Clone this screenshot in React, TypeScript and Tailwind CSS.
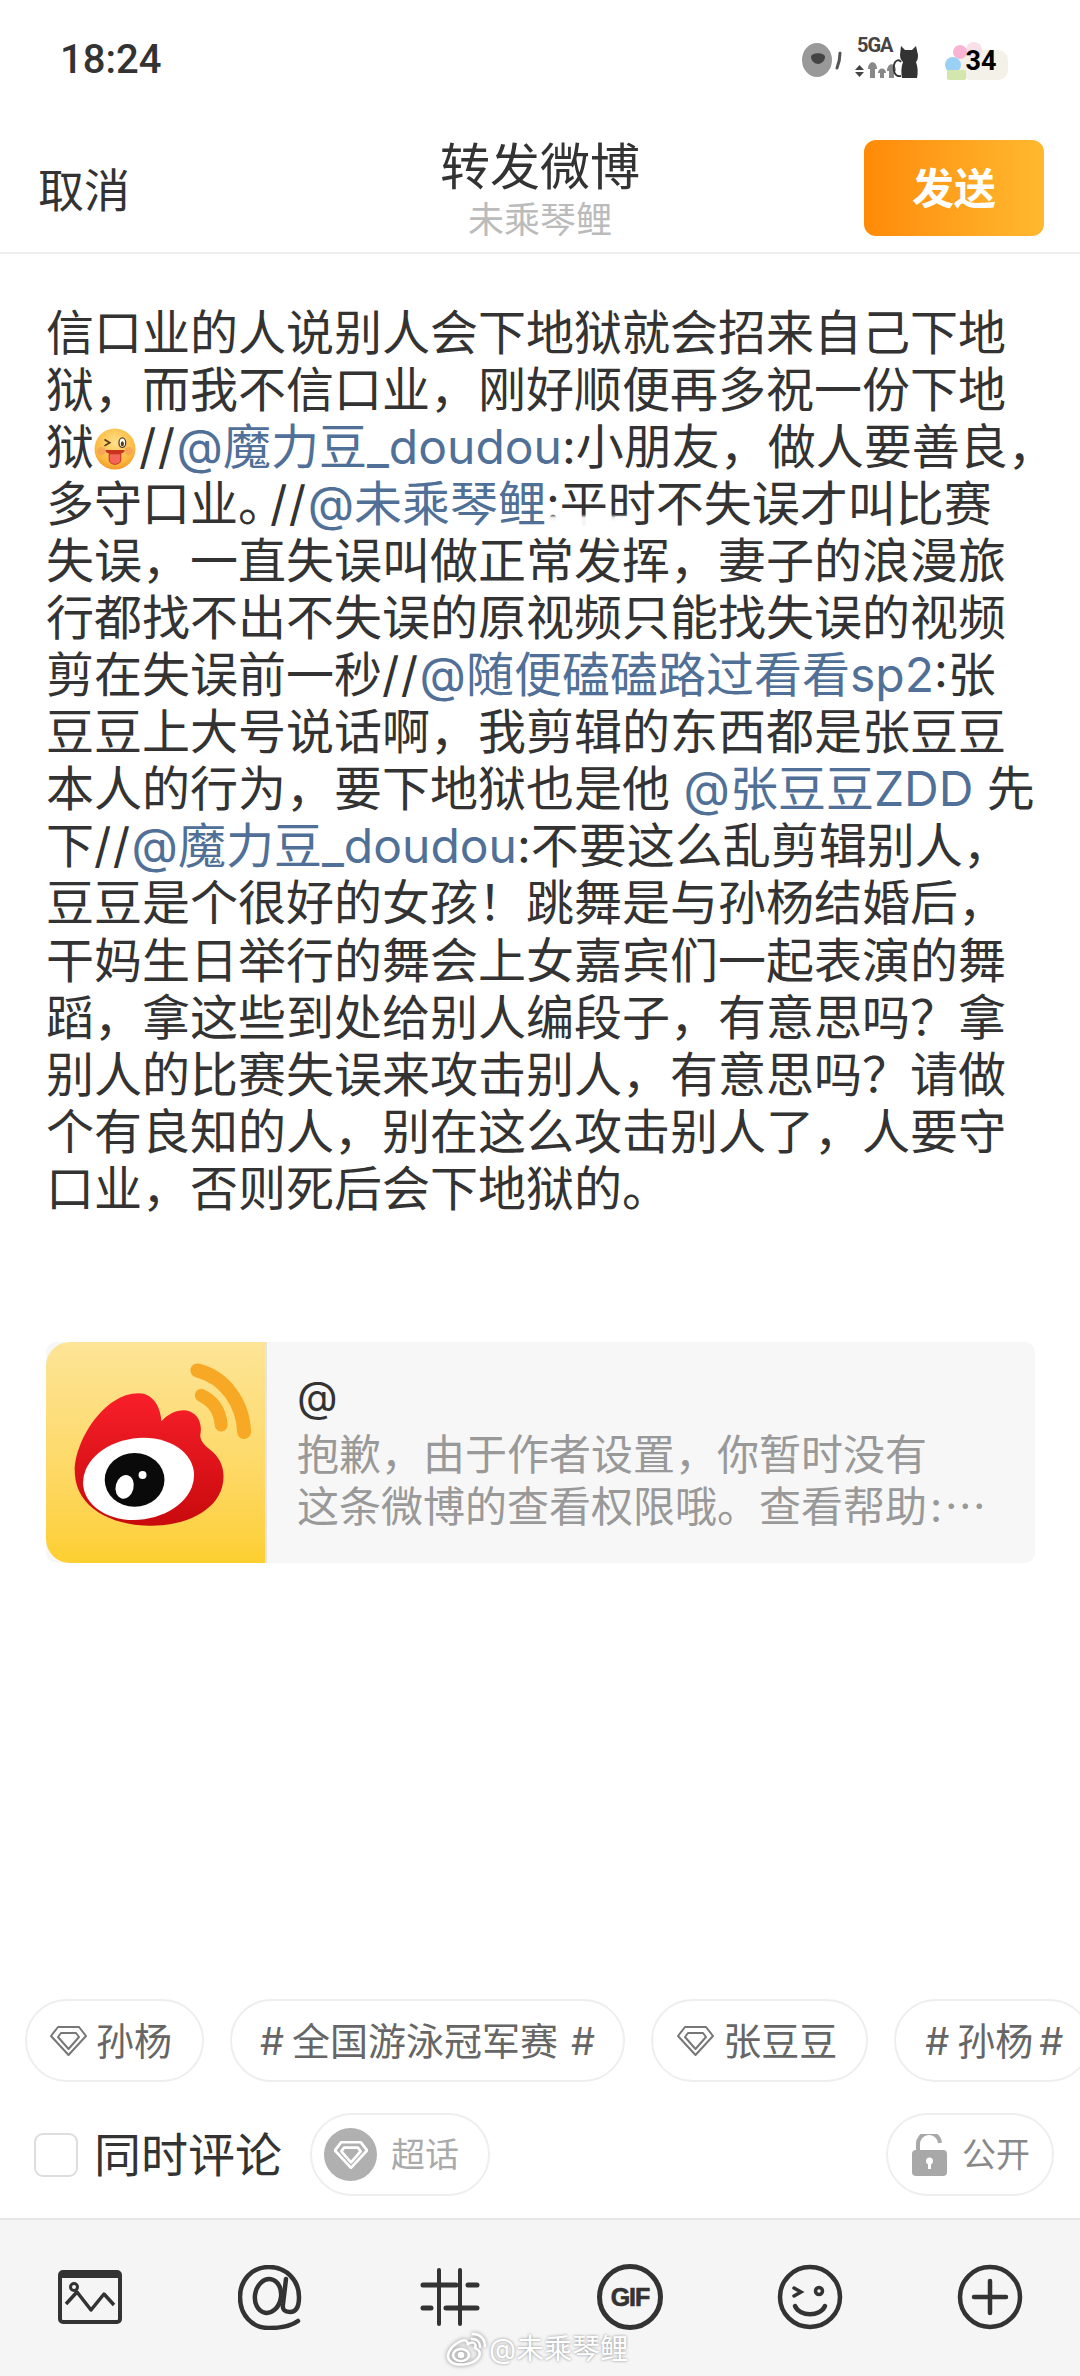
import React from 'react';

const Link = ({ children }: { children: React.ReactNode }) => <span className="text-[#507097]">{children}</span>;

const Slashes = () => <span className="tracking-[1.5px]">//</span>;

const WinkEmoji = () => (
  <svg viewBox="0 0 40 40" className="mr-[3px] inline-block h-[42px] w-[42px] align-[-6px]">
    <defs>
      <radialGradient id="face" cx="50%" cy="35%" r="70%">
        <stop offset="0%" stopColor="#ffe08a" />
        <stop offset="70%" stopColor="#fbb93f" />
        <stop offset="100%" stopColor="#ef8f25" />
      </radialGradient>
    </defs>
    <circle cx="20" cy="20" r="19.5" fill="url(#face)" />
    <circle cx="7" cy="22" r="4" fill="#f7945d" opacity="0.6" />
    <circle cx="33" cy="22" r="4" fill="#f7945d" opacity="0.6" />
    <path d="M10 11l5 3-5 3" fill="none" stroke="#5a3a18" strokeWidth="1.6" />
    <ellipse cx="27" cy="14" rx="3.2" ry="4.5" fill="#fff" stroke="#5a3a18" strokeWidth="1.2" />
    <ellipse cx="27" cy="15" rx="1.5" ry="2.4" fill="#5a3a18" />
    <path d="M11 21h18c0 2-1 3-3 3v6c0 3-3 5-6 5s-6-2-6-5v-6c-2 0-3-1-3-3z" fill="#c9341f" />
    <path d="M15 25h10v5c0 3-2 4-5 4s-5-1-5-4z" fill="#f4655a" />
  </svg>
);

const lines: React.ReactNode[] = [
  '信口业的人说别人会下地狱就会招来自己下地',
  '狱，而我不信口业，刚好顺便再多祝一份下地',
  <>狱<WinkEmoji /><Slashes /><Link>@魔力豆_doudou</Link>:小朋友，做人要善良，</>,
  <>多守口业<span className="mr-[8px] [font-feature-settings:'halt']">。</span><Slashes /><Link>@未乘琴鲤</Link>:平时不失误才叫比赛</>,
  '失误，一直失误叫做正常发挥，妻子的浪漫旅',
  '行都找不出不失误的原视频只能找失误的视频',
  <>剪在失误前一秒<Slashes /><Link>@随便磕磕路过看看sp2</Link>:张</>,
  '豆豆上大号说话啊，我剪辑的东西都是张豆豆',
  <>本人的行为，要下地狱也是他 <Link>@张豆豆ZDD</Link> 先</>,
  <>下<Slashes /><Link>@魔力豆_doudou</Link>:不要这么乱剪辑别人，</>,
  '豆豆是个很好的女孩！跳舞是与孙杨结婚后，',
  '干妈生日举行的舞会上女嘉宾们一起表演的舞',
  '蹈，拿这些到处给别人编段子，有意思吗？拿',
  '别人的比赛失误来攻击别人，有意思吗？请做',
  '个有良知的人，别在这么攻击别人了，人要守',
  '口业，否则死后会下地狱的。',
];

const Diamond = ({ className, stroke = '#777', width = 2 }: { className: string; stroke?: string; width?: number }) => (
  <svg viewBox="0 0 37 30" className={className} fill="none" stroke={stroke} strokeWidth={width} strokeLinejoin="round">
    <path d="M8 1h21l7 9-17.5 19L1 10z" />
    <path d="M11 7h15l3 4-10.5 12L8 11z" />
  </svg>
);

const Tag = ({ children, className }: { children: React.ReactNode; className: string }) => (
  <div className={`flex h-[83px] shrink-0 items-center whitespace-nowrap rounded-full border-2 border-[#eeeeee] text-[38px] text-[#666666] ${className}`}>
    {children}
  </div>
);

const WeiboIcon = () => (
  <svg viewBox="0 0 220 221" className="h-full w-full">
    <defs>
      <linearGradient id="red" x1="0" y1="0" x2="0" y2="1">
        <stop offset="0%" stopColor="#f81f2a" />
        <stop offset="100%" stopColor="#c80a0c" />
      </linearGradient>
    </defs>
    <path d="M93 51c14 0 22 13 23 28 8-9 20-13 28-10 10 4 13 14 11 24 0 6 4 10 9 14 12 9 17 22 13 38-7 26-40 40-74 39-38-1-72-18-74-52-2-30 28-81 64-81z" fill="url(#red)" />
    <ellipse cx="93" cy="137" rx="56" ry="41" fill="#fff" transform="rotate(-8 93 137)" />
    <ellipse cx="89" cy="138" rx="30" ry="27" fill="#0a0a0a" />
    <ellipse cx="79" cy="145" rx="9" ry="12" fill="#fff" transform="rotate(15 79 145)" />
    <circle cx="97" cy="133" r="4" fill="#fff" />
    <path d="M156 53c13 6 19 17 20 30" fill="none" stroke="#f7a825" strokeWidth="13" strokeLinecap="round" />
    <path d="M152 28c28 7 46 33 47 62" fill="none" stroke="#f7a825" strokeWidth="14" strokeLinecap="round" />
  </svg>
);

export default function App() {
  return (
    <div className="relative flex h-[2376px] w-[1080px] flex-col overflow-hidden bg-white font-['Inter','Noto_Sans_CJK_SC',sans-serif] text-[#333333]">
      {/* status bar */}
      <div className="flex h-[120px] items-start justify-between pl-[60px] pr-[72px] pt-[36px] font-['Roboto','Noto_Sans_CJK_SC',sans-serif]">
        <span className="text-[40px] font-medium leading-[48px] text-[#333333]">18:24</span>
        <div className="flex items-start">
          <svg viewBox="0 0 40 34" className="mt-[7px] h-[34px] w-[40px]">
            <ellipse cx="15" cy="17" rx="15" ry="17" fill="#999" />
            <path d="M9 14c0-5 14-5 14 0 0 4-4 7-7 7s-7-3-7-7z" fill="#444" />
            <path d="M38 10c0 5-1 10-3 15" fill="none" stroke="#555" strokeWidth="3" strokeLinecap="round" />
          </svg>
          <div className="relative ml-[13px] mt-[1px] h-[41px] w-[64px]">
            <span className="absolute left-[2px] top-[-4px] text-[20px] font-bold leading-[24px] tracking-[-1px] text-[#444444]">5GA</span>
            <svg viewBox="0 0 64 41" className="absolute left-0 top-0 h-[41px] w-[64px]">
              <path d="M4.500 28L0 33h9zM0 35h9l-4.500 5z" fill="#444" />
              <path d="M13 32c0-9 9-9 9 0h-2v9h-5v-9zM23 36c0-6 8-6 8 0h-2v5h-4v-5zM32 34c0-9 9-9 9 0h-2v7h-5v-7z" fill="#888" />
              <path d="M46 9l4 4h7l4-4 2 9c0 4-1 6-2 7 2 5 2 11 1 16H47c-1-5-1-11 1-16-2-2-3-4-3-7z" fill="#333" />
              <path d="M46 39c-6 1-8-4-7-11 1-5 5-6 7-3" fill="none" stroke="#333" strokeWidth="1.800" />
            </svg>
          </div>
          <div className="relative ml-[23px] mt-[6px] flex h-[38px] w-[66px] items-center justify-center">
            <svg viewBox="0 0 66 38" className="absolute left-0 top-0 h-[38px] w-[66px]">
              <rect x="18" y="8" width="48" height="30" rx="10" fill="#f4f2e8" />
              <circle cx="32" cy="8" r="8" fill="#f8dfe8" />
              <circle cx="18" cy="10" r="7" fill="#f9b3d3" />
              <circle cx="11" cy="23" r="8" fill="#9bd0f5" />
              <rect x="5" y="28" width="19" height="10" rx="2" fill="#d2e6ae" />
            </svg>
            <span className="relative pl-[12px] text-[27px] font-bold leading-none text-black">34</span>
          </div>
        </div>
      </div>

      {/* header */}
      <div className="relative flex h-[134px] items-start justify-between border-b-2 border-[#eeeeee] pl-[38px] pr-[36px]">
        <span className="mt-[43px] text-[46px] leading-[54px] text-[#333333]">取消</span>
        <div className="absolute inset-x-0 top-[19px] flex flex-col items-center">
          <span className="text-[50px] leading-[56px] text-[#333333]">转发微博</span>
          <span className="mt-[3px] text-[36px] leading-[44px] text-[#bbbbbb]">未乘琴鲤</span>
        </div>
        <div className="relative mt-[20px] flex h-[96px] w-[180px] items-center justify-center rounded-[12px] bg-gradient-to-r from-[#ff8a05] to-[#ffb92e] text-[42px] font-bold text-white">
          发送
        </div>
      </div>

      {/* post text */}
      <div className="flex-1 pl-[46px]">
        <div className="mt-[50px] whitespace-nowrap text-[48px] leading-[57.05px] text-[#333333]">
          {lines.map((line, i) => (
            <div key={i}>{line}</div>
          ))}
        </div>

        <div className="mt-[125px] flex h-[221px] w-[989px] overflow-hidden rounded-[10px] bg-[#f7f7f7]">
          <div className="h-full w-[221px] shrink-0 overflow-hidden rounded-l-[24px] border-r-2 border-[#e4e4e4] bg-gradient-to-b from-[#fde597] to-[#fdcf2e]">
            <WeiboIcon />
          </div>
          <div className="flex flex-col pl-[30px] pt-[29px]">
            <span className="text-[42px] leading-[52px] text-[#333333]">@</span>
            <span className="mt-[6px] whitespace-nowrap text-[42px] leading-[52px] text-[#999999]">抱歉，由于作者设置，你暂时没有</span>
            <span className="whitespace-nowrap text-[42px] leading-[52px] text-[#999999]">这条微博的查看权限哦。查看帮助<span className="ml-[3px]">:</span><span className="ml-[2px]">⋯</span></span>
          </div>
        </div>
      </div>

      {/* topic suggestions */}
      <div className="flex gap-[26px] pl-[25px]">
        <Tag className="pl-[23px] pr-[30px] pt-[2px]">
          <Diamond className="mb-[2px] mr-[9px] h-[30px] w-[37px]" />
          孙杨
        </Tag>
        <Tag className="pl-[28px] pr-[28px] pt-[2px]">
          #<span className="ml-[8px] mr-[13px]">全国游泳冠军赛</span>#
        </Tag>
        <Tag className="pl-[24px] pr-[29px] pt-[2px]">
          <Diamond className="mb-[2px] mr-[9px] h-[30px] w-[37px]" />
          张豆豆
        </Tag>
        <Tag className="pl-[29px] pr-[26px] pt-[2px]">
          #<span className="ml-[8px] mr-[6px]">孙杨</span>#
        </Tag>
      </div>

      {/* options */}
      <div className="mt-[31px] flex h-[83px] items-center pl-[34px] pr-[26px]">
        <div className="h-[44px] w-[44px] rounded-[9px] border-2 border-[#dddddd]" />
        <span className="ml-[16px] text-[47px] leading-[56px] text-[#333333]">同时评论</span>
        <div className="ml-[28px] flex h-[83px] items-center rounded-full border-2 border-[#eeeeee] pl-[12px] pr-[29px]">
          <div className="flex h-[53px] w-[53px] items-center justify-center rounded-full bg-[#b0b0b0]">
            <Diamond className="h-[28px] w-[34px]" stroke="#ffffff" width={3} />
          </div>
          <span className="ml-[14px] text-[34px] text-[#aaaaaa]">超话</span>
        </div>
        <div className="ml-auto flex h-[83px] items-center rounded-full border-2 border-[#eeeeee] pl-[24px] pr-[22px]">
          <svg viewBox="0 0 35 42" className="h-[42px] w-[35px]">
            <path d="M6 17v-6a11 11 0 0 1 22-2" fill="none" stroke="#a8a8a8" strokeWidth="4" />
            <rect x="0" y="16" width="35" height="26" rx="4" fill="#a8a8a8" />
            <circle cx="17.500" cy="27" r="3.500" fill="#fff" />
            <rect x="16" y="28" width="3" height="7" fill="#fff" />
          </svg>
          <span className="ml-[15px] text-[34px] text-[#888888]">公开</span>
        </div>
      </div>

      {/* toolbar */}
      <div className="mt-[22px] grid h-[158px] grid-cols-6 items-center border-t-2 border-[#e6e6e6] bg-[#f5f5f5] pb-[2px]">
        <div className="flex justify-center">
          <svg viewBox="0 0 64 54" className="h-[54px] w-[64px]" fill="none" stroke="#333" strokeWidth="4">
            <rect x="2" y="2" width="60" height="50" rx="3" />
            <path d="M2 5h60" strokeWidth="6" />
            <circle cx="16" cy="17" r="3.500" strokeWidth="3" />
            <path d="M8 34l11-12 14 18 13-16 10 11" strokeLinejoin="round" strokeWidth="3.500" />
          </svg>
        </div>
        <div className="flex justify-center">
          <svg viewBox="0 0 64 65" className="h-[65px] w-[64px]" fill="none" stroke="#333" strokeWidth="4.500" strokeLinecap="round">
            <path d="M60 56C52 62 42 63 31 63 14 63 2 50 2 32 2 15 14 2 31 2c17 0 30 13 30 30 0 8-2 15-9 15-5 0-8-2-7-8l3-25" />
            <ellipse cx="30" cy="31" rx="13" ry="17" transform="rotate(10 30 31)" />
          </svg>
        </div>
        <div className="flex justify-center">
          <svg viewBox="0 0 60 58" className="h-[58px] w-[60px]" fill="none" stroke="#333" strokeLinecap="round">
            <path d="M19 2v54M40 2v54" strokeWidth="4" />
            <path d="M3 17h33M48 17h9M3 40h8M26 40h31" strokeWidth="5" />
          </svg>
        </div>
        <div className="flex justify-center">
          <div className="flex h-[66px] w-[66px] items-center justify-center rounded-full border-[5px] border-[#333333] font-['Liberation_Sans',sans-serif] text-[25px] font-bold leading-none tracking-[-1px] text-[#333333] [-webkit-text-stroke:0.6px_#333333]">
            GIF
          </div>
        </div>
        <div className="flex justify-center">
          <svg viewBox="0 0 66 66" className="h-[66px] w-[66px]" fill="none" stroke="#333" strokeWidth="4.500" strokeLinecap="round">
            <circle cx="33" cy="33" r="30" />
            <path d="M17 24l7 4-7 4" strokeWidth="3.500" />
            <circle cx="42" cy="27" r="3.500" strokeWidth="3.500" />
            <path d="M18 42c5 11 25 11 30 0" />
          </svg>
        </div>
        <div className="flex justify-center">
          <svg viewBox="0 0 66 66" className="h-[66px] w-[66px]" fill="none" stroke="#333" strokeWidth="4.500" strokeLinecap="round">
            <circle cx="33" cy="33" r="30" />
            <path d="M33 17v32M17 33h32" />
          </svg>
        </div>
      </div>

      {/* smudge over the text and the watermark lie on top of the page */}
      <div className="absolute left-[548px] top-[516px] h-[20px] w-[82px] bg-white/95 blur-[1px]" />
      <div className="absolute left-[446px] top-[2332px] flex items-center gap-[3px] text-[28px] leading-[34px] text-white [text-shadow:0_0_3px_#888888]">
        <svg viewBox="0 0 40 34" className="h-[34px] w-[40px] drop-shadow-[0_0_2px_#888888]" fill="none" stroke="#ffffff" strokeWidth="2.500" strokeLinecap="round">
          <path d="M22 12c5-3 9-1 7 4 5 2 6 6 3 10-5 7-22 9-28 3C-1 24 4 15 13 10c5-3 8-2 9 2z" />
          <ellipse cx="15" cy="23" rx="8" ry="6" />
          <circle cx="15" cy="23" r="2" fill="#ffffff" />
          <path d="M26 7c5 0 8 3 8 8M27 2c7 0 12 5 12 12" />
        </svg>
        <span>@未乘琴鲤</span>
      </div>
    </div>
  );
}
